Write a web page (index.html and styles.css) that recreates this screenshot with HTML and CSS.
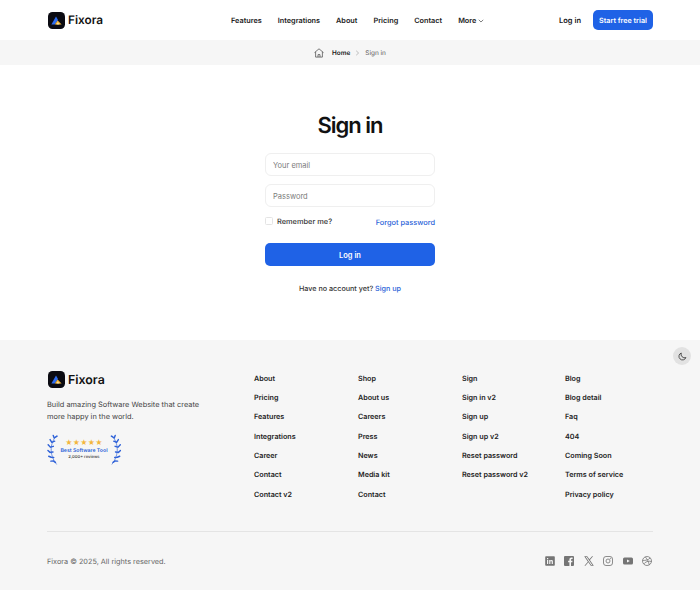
FILE: index.html
```html
<!DOCTYPE html>
<html lang="en">
<head>
  <meta charset="UTF-8" />
  <meta name="viewport" content="width=device-width, initial-scale=1.0" />
  <title>Sign in - Fixora</title>
  <link rel="stylesheet" href="styles.css">
</head>
<body>
  <svg class="svg-defs" width="0" height="0" aria-hidden="true">
    <symbol id="logo" viewBox="0 0 17 17">
      <rect width="17" height="17" rx="4.5" fill="#0b0b12" />
      <path d="M3.4 12.600 8 4.400 10 8 6.800 12.600z" fill="#2f6df0" />
      <path d="M6.800 12.600 9.600 8.400 13.600 12.600z" fill="#f5b93c" />
      <path d="M8.400 12.600 9.800 10.600 11.600 12.600z" fill="#fbe3a4" />
    </symbol>
    <symbol id="laurel" viewBox="0 0 14 34">
      <path d="M10 2C3.500 9 1.500 21 10 32" fill="none" stroke="#2f62d8" stroke-width=".7" />
      <g fill="none" stroke="#2f62d8" stroke-width="1.500" stroke-linecap="round">
        <path d="M7.500 4.500 6.500 1.800M7.500 4.500 10.500 2.600" />
        <path d="M5 9 3.200 6.200M5 9 8 7.800" />
        <path d="M3.500 14 1.200 11.500M3.500 14 6.600 13.200" />
        <path d="M3.200 19.500 1 17.500M3.200 19.500 6.200 19" />
        <path d="M4.300 24.500 1.800 23.500M4.300 24.500 7 24.800" />
        <path d="M6.800 28.500 4 28.600M6.800 28.500 8.800 29.800" />
      </g>
    </symbol>
  </svg>

  <header class="site-header">
    <a class="logo" href="#">
      <svg class="logo-mark"><use href="#logo" /></svg>
      <span>Fixora</span>
    </a>
    <nav class="main-nav">
      <a href="#">Features</a>
      <a href="#">Integrations</a>
      <a href="#">About</a>
      <a href="#">Pricing</a>
      <a href="#">Contact</a>
      <a href="#" class="more">More<svg width="6" height="4" viewBox="0 0 7 5" fill="none" stroke="#333" stroke-width="0.8"><path d="M.7 1 3.500 3.800 6.300 1" /></svg></a>
    </nav>
    <div class="header-actions">
      <a href="#" class="login-link">Log in</a>
      <a href="#" class="btn-trial">Start free trial</a>
    </div>
  </header>

  <div class="breadcrumb">
    <svg class="crumb-icon" width="10" height="10" viewBox="0 0 10 10" fill="none" stroke="#444" stroke-width="0.7"><path d="M.5 4.600 5 .8l4.500 3.800M1.600 3.900v5.200h6.800V3.900M4 9V6.600h2V9" /></svg>
    <a href="#" class="crumb-home">Home</a>
    <svg width="5" height="6" viewBox="0 0 5 6" fill="none" stroke="#999" stroke-width="0.6"><path d="M1.200.8 3.600 3 1.200 5.200" /></svg>
    <span class="crumb-current">Sign in</span>
  </div>

  <main class="signin">
    <h1>Sign in</h1>
    <form class="signin-form">
      <input type="email" class="form-control" placeholder="Your email" />
      <input type="password" class="form-control" placeholder="Password" />
      <div class="form-row">
        <label class="remember"><span class="checkbox"></span>Remember me?</label>
        <a href="#" class="link forgot">Forgot password</a>
      </div>
      <button type="button" class="btn-login">Log in</button>
    </form>
    <p class="signup-note">Have no account yet? <a href="#" class="link">Sign up</a></p>
  </main>

  <footer class="site-footer">
    <button class="theme-toggle" aria-label="Toggle theme">
      <svg width="9" height="9" viewBox="0 0 10 10" fill="none" stroke="#333" stroke-width="0.9"><path d="M8.800 6.200A4 4 0 0 1 3.600 1.100 4 4 0 1 0 8.800 6.200z" /></svg>
    </button>
    <div class="footer-top">
      <div class="footer-brand">
        <a class="logo" href="#">
          <svg class="logo-mark"><use href="#logo" /></svg>
          <span>Fixora</span>
        </a>
        <p>Build amazing Software Website that create more happy in the world.</p>
        <div class="award">
          <svg class="laurel"><use href="#laurel" /></svg>
          <div class="award-text">
            <div class="stars">★★★★★</div>
            <div class="award-title">Best Software Tool</div>
            <div class="award-sub">2,000+ reviews</div>
          </div>
          <svg class="laurel flip"><use href="#laurel" /></svg>
        </div>
      </div>
      <div class="footer-links">
        <ul>
          <li><a href="#">About</a></li>
          <li><a href="#">Pricing</a></li>
          <li><a href="#">Features</a></li>
          <li><a href="#">Integrations</a></li>
          <li><a href="#">Career</a></li>
          <li><a href="#">Contact</a></li>
          <li><a href="#">Contact v2</a></li>
        </ul>
        <ul>
          <li><a href="#">Shop</a></li>
          <li><a href="#">About us</a></li>
          <li><a href="#">Careers</a></li>
          <li><a href="#">Press</a></li>
          <li><a href="#">News</a></li>
          <li><a href="#">Media kit</a></li>
          <li><a href="#">Contact</a></li>
        </ul>
        <ul>
          <li><a href="#">Sign</a></li>
          <li><a href="#">Sign in v2</a></li>
          <li><a href="#">Sign up</a></li>
          <li><a href="#">Sign up v2</a></li>
          <li><a href="#">Reset password</a></li>
          <li><a href="#">Reset password v2</a></li>
        </ul>
        <ul>
          <li><a href="#">Blog</a></li>
          <li><a href="#">Blog detail</a></li>
          <li><a href="#">Faq</a></li>
          <li><a href="#">404</a></li>
          <li><a href="#">Coming Soon</a></li>
          <li><a href="#">Terms of service</a></li>
          <li><a href="#">Privacy policy</a></li>
        </ul>
      </div>
    </div>
    <div class="footer-bottom">
      <span class="copyright">Fixora © 2025, All rights reserved.</span>
      <div class="socials">
        <svg viewBox="0 0 10 10"><path fill="#757575" fill-rule="evenodd" d="M1 .2h8a.8.8 0 0 1 .8.8v8a.8.8 0 0 1-.8.8H1a.8.8 0 0 1-.8-.8V1A.8.8 0 0 1 1 .2zM2 4v4h1.200V4zM2 2.100v1.100h1.200V2.100zM4.200 4v4h1.200V5.800c0-1 1.300-1 1.300 0V8h1.200V5.500C7.900 3.600 6 3.600 5.400 4.500V4z" /></svg>
        <svg viewBox="0 0 10 10"><path fill="#757575" d="M1 0h8a1 1 0 0 1 1 1v8a1 1 0 0 1-1 1H7V6.200h1.300l.2-1.500H7v-1c0-.5.2-.8.8-.8h.8V1.600C8.300 1.500 7.900 1.500 7.400 1.500 6.200 1.500 5.400 2.200 5.400 3.500v1.200H4.100v1.500h1.300V10H1a1 1 0 0 1-1-1V1a1 1 0 0 1 1-1z" /></svg>
        <svg viewBox="0 0 10 10"><path fill="#757575" d="M.2.300h3l2.200 3L8.100.300h1L5.900 3.900 9.800 9.700h-3L4.400 6.300 1.400 9.700h-1l3.500-4zM1.700 1l5.500 8h1.100L2.800 1z" /></svg>
        <svg viewBox="0 0 10 10" fill="none" stroke="#808080" stroke-width=".9"><rect x=".5" y=".5" width="9" height="9" rx="2.500" /><circle cx="5" cy="5" r="2" /><circle cx="7.500" cy="2.500" r=".3" /></svg>
        <svg viewBox="0 0 10 10"><path fill="#757575" d="M1.500 1.500h7A1.500 1.500 0 0 1 10 3v4a1.500 1.500 0 0 1-1.500 1.500h-7A1.500 1.500 0 0 1 0 7V3a1.500 1.500 0 0 1 1.500-1.500zM4 3.400v3.200L6.800 5z" fill-rule="evenodd" /></svg>
        <svg viewBox="0 0 10 10" fill="none" stroke="#757575" stroke-width=".8"><circle cx="5" cy="5" r="4.500" /><path d="M3.300.9C5 3 6.800 6 7.300 9M.6 4.400C3.500 4.600 6.500 4 8.200 1.900M1.700 8C3.200 5.800 6.500 4.600 9.500 5.500" /></svg>
      </div>
    </div>
  </footer>
</body>
</html>
```

FILE: styles.css
```css
* {
  box-sizing: border-box;
}

body {
  font-family: Inter, "Noto Sans", sans-serif;
  background-color: #ffffff;
  color: #16161a;
  margin: 0;
  padding: 0;
  overflow: hidden;
  text-rendering: geometricPrecision;
}

a {
  color: inherit;
  text-decoration: none;
}

.svg-defs {
  position: absolute;
}

.site-header {
  height: 40px;
  padding: 0 47px 0 48px;
  display: flex;
  align-items: center;
}

.logo {
  display: flex;
  align-items: center;
  gap: 3px;
  font-size: 11.800px;
  font-weight: 600;
  color: #111;
}

.logo-mark {
  width: 17px;
  height: 17px;
}

.main-nav {
  margin-left: 128px;
  display: flex;
  gap: 16px;
  font-size: 7.300px;
  font-weight: 600;
  color: #222;
  padding-top: 1px;
}

.more {
  display: flex;
  align-items: center;
  gap: 2px;
}

.header-actions {
  margin-left: auto;
  display: flex;
  align-items: center;
  gap: 12px;
  font-size: 7.500px;
  font-weight: 600;
}

.btn-trial {
  background-color: #1f62e6;
  color: #ffffff;
  width: 60px;
  height: 20px;
  border-radius: 5px;
  display: flex;
  align-items: center;
  justify-content: center;
  font-size: 7.200px;
}

.breadcrumb {
  height: 25px;
  background-color: #f6f6f6;
  display: flex;
  align-items: center;
  justify-content: center;
  gap: 5px;
  font-size: 6.400px;
}

.crumb-icon {
  margin-right: 3px;
}

.crumb-home {
  font-weight: 600;
}

.crumb-current {
  color: #777;
  font-weight: 500;
}

.signin {
  height: 275px;
  padding-top: 47px;
  display: flex;
  flex-direction: column;
  align-items: center;
}

.signin h1 {
  margin: 0;
  font-size: 22px;
  line-height: 29px;
  font-weight: 600;
  letter-spacing: -1px;
  color: #111;
}

.signin-form {
  width: 170px;
  margin-top: 12px;
  display: flex;
  flex-direction: column;
}

.form-control {
  width: 100%;
  height: 23px;
  margin-bottom: 8px;
  padding: 1px 7px 0;
  border: 1px solid #efefef;
  border-radius: 6px;
  font-family: inherit;
  font-size: 7.500px;
  background: #ffffff;
}

.form-control::placeholder {
  color: #7b7b7b;
}

.form-row {
  display: flex;
  justify-content: space-between;
  align-items: center;
  height: 12px;
  font-size: 7.400px;
}

.remember {
  display: flex;
  align-items: center;
  gap: 4px;
  color: #333;
  font-weight: 500;
}

.checkbox {
  width: 8px;
  height: 8px;
  border: 1px solid #e4e4e4;
  border-radius: 1.500px;
}

.link {
  color: #2a62d8;
  font-weight: 500;
}

.forgot {
  padding-top: 2px;
}

.btn-login {
  margin-top: 16px;
  height: 23px;
  padding: 1px 0 0;
  border: none;
  border-radius: 5px;
  background-color: #1f62e6;
  color: #ffffff;
  font-family: inherit;
  font-size: 7.500px;
  font-weight: 600;
  cursor: pointer;
}

.signup-note {
  margin: 17px 0 0;
  font-size: 7.200px;
  line-height: 12px;
  font-weight: 500;
  color: #333;
}

.site-footer {
  position: relative;
  height: 250px;
  background-color: #f6f6f6;
  padding: 0 47px;
}

.theme-toggle {
  position: absolute;
  top: 7px;
  right: 9px;
  width: 18px;
  height: 18px;
  padding: 0;
  border: none;
  border-radius: 50%;
  background-color: #e2e2e2;
  display: flex;
  align-items: center;
  justify-content: center;
}

.footer-top {
  height: 192px;
  padding-top: 31px;
  display: flex;
  border-bottom: 1px solid #e4e4e4;
}

.footer-brand {
  flex: 0 0 207px;
}

.footer-brand .logo {
  margin-left: 1px;
  font-size: 12.400px;
  gap: 3px;
}

.footer-brand p {
  margin: 11px 0 0;
  font-size: 7.400px;
  line-height: 12px;
  color: #444;
  width: 160px;
}

.award {
  margin-top: 10px;
  width: 74px;
  display: flex;
  align-items: center;
  justify-content: space-between;
}

.laurel {
  width: 14px;
  height: 34px;
}

.flip {
  transform: scaleX(-1);
}

.award-text {
  text-align: center;
  white-space: nowrap;
}

.stars {
  color: #f3b73f;
  font-size: 7px;
  line-height: 8px;
  letter-spacing: 0.2px;
}

.award-title {
  color: #2a62d8;
  font-size: 5.200px;
  font-weight: 600;
  line-height: 8px;
}

.award-sub {
  color: #333;
  font-size: 4.200px;
  line-height: 6px;
  font-weight: 500;
}

.footer-links {
  padding-top: 1.500px;
  display: grid;
  grid-template-columns: 104px 104px 103px 88px;
}

.footer-links ul {
  list-style: none;
  margin: 0;
  padding: 0;
  display: flex;
  flex-direction: column;
  gap: 8.400px;
  font-size: 7.200px;
  line-height: 11px;
  font-weight: 600;
  color: #222;
}

.footer-bottom {
  height: 58px;
  display: flex;
  align-items: center;
  justify-content: space-between;
}

.copyright {
  font-size: 7.300px;
  color: #666;
}

.socials {
  display: flex;
  gap: 9.400px;
  padding-right: 1px;
}

.socials svg {
  width: 10px;
  height: 10px;
}
```
